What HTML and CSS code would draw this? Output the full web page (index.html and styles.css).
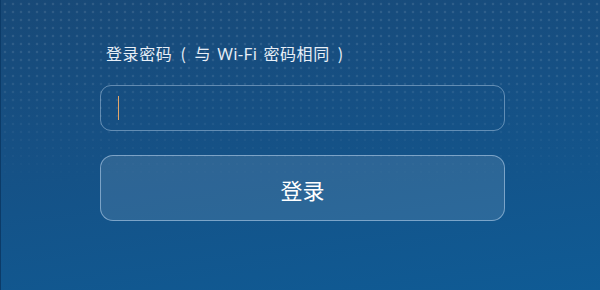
FILE: index.html
```html
<!DOCTYPE html>
<html lang="zh-CN">
<head>
    <meta charset="UTF-8">
    <meta name="viewport" content="width=device-width, initial-scale=1.0">
    <title>登录</title>
    <link rel="stylesheet" href="styles.css">
</head>
<body>
    <div class="bg_dots"></div>
    <div class="login">
        <p class="label">登录密码<span class="paren">(</span>与 <span class="latin">Wi-Fi</span> 密码相同<span class="paren">)</span></p>
        <div class="ent">
            <span class="caret"></span>
        </div>
        <div class="subbtn">登录</div>
    </div>
</body>
</html>
```

FILE: styles.css
```css
* {
    margin: 0;
    padding: 0;
    box-sizing: border-box;
    font-family: "Microsoft YaHei", "Noto Sans CJK SC", "Liberation Sans", sans-serif;
}

html, body {
    width: 100%;
    height: 100%;
    overflow: hidden;
}

body {
    position: relative;
    background: linear-gradient(172deg, #184977 0%, #165084 40%, #0f5b95 100%);
    border-left: 1px solid #0c3b68;
    color: #e6eef6;
}

.bg_dots {
    position: absolute;
    top: 0;
    left: 0;
    right: 0;
    height: 190px;
    background-image: radial-gradient(circle, rgba(255,255,255,0.10) 1px, transparent 1.7px);
    background-size: 8px 8px;
    -webkit-mask-image: linear-gradient(to bottom, #000 0%, #000 30%, transparent 100%);
    mask-image: linear-gradient(to bottom, #000 0%, #000 30%, transparent 100%);
}

.login {
    position: relative;
    width: 405px;
    margin-left: 99px;
    padding-top: 42px;
    display: flex;
    flex-direction: column;
}

.label {
    height: 22px;
    font-size: 16px;
    line-height: 22px;
    letter-spacing: 0.6px;
    word-spacing: 2px;
    padding-left: 6px;
    color: #e8eff7;
    white-space: nowrap;
}

.label .latin {
    font-family: "Open Sans", "Noto Sans", sans-serif;
    font-size: 17px;
    line-height: 1;
    letter-spacing: 0.3px;
}

.paren {
    display: inline-block;
    width: 22px;
    text-align: center;
}

.ent {
    margin-top: 21px;
    height: 46px;
    border: 1px solid rgba(190, 215, 240, 0.45);
    border-radius: 11px;
    display: flex;
    align-items: center;
    padding-left: 17px;
}

.caret {
    width: 1px;
    height: 24px;
    background: #e2a56a;
}

.subbtn {
    margin-top: 24px;
    height: 66px;
    border: 1px solid rgba(190, 215, 240, 0.55);
    border-radius: 13px;
    background: rgba(255, 255, 255, 0.11);
    color: #ffffff;
    font-size: 22px;
    display: flex;
    align-items: center;
    justify-content: center;
    padding-top: 1px;
}
```
